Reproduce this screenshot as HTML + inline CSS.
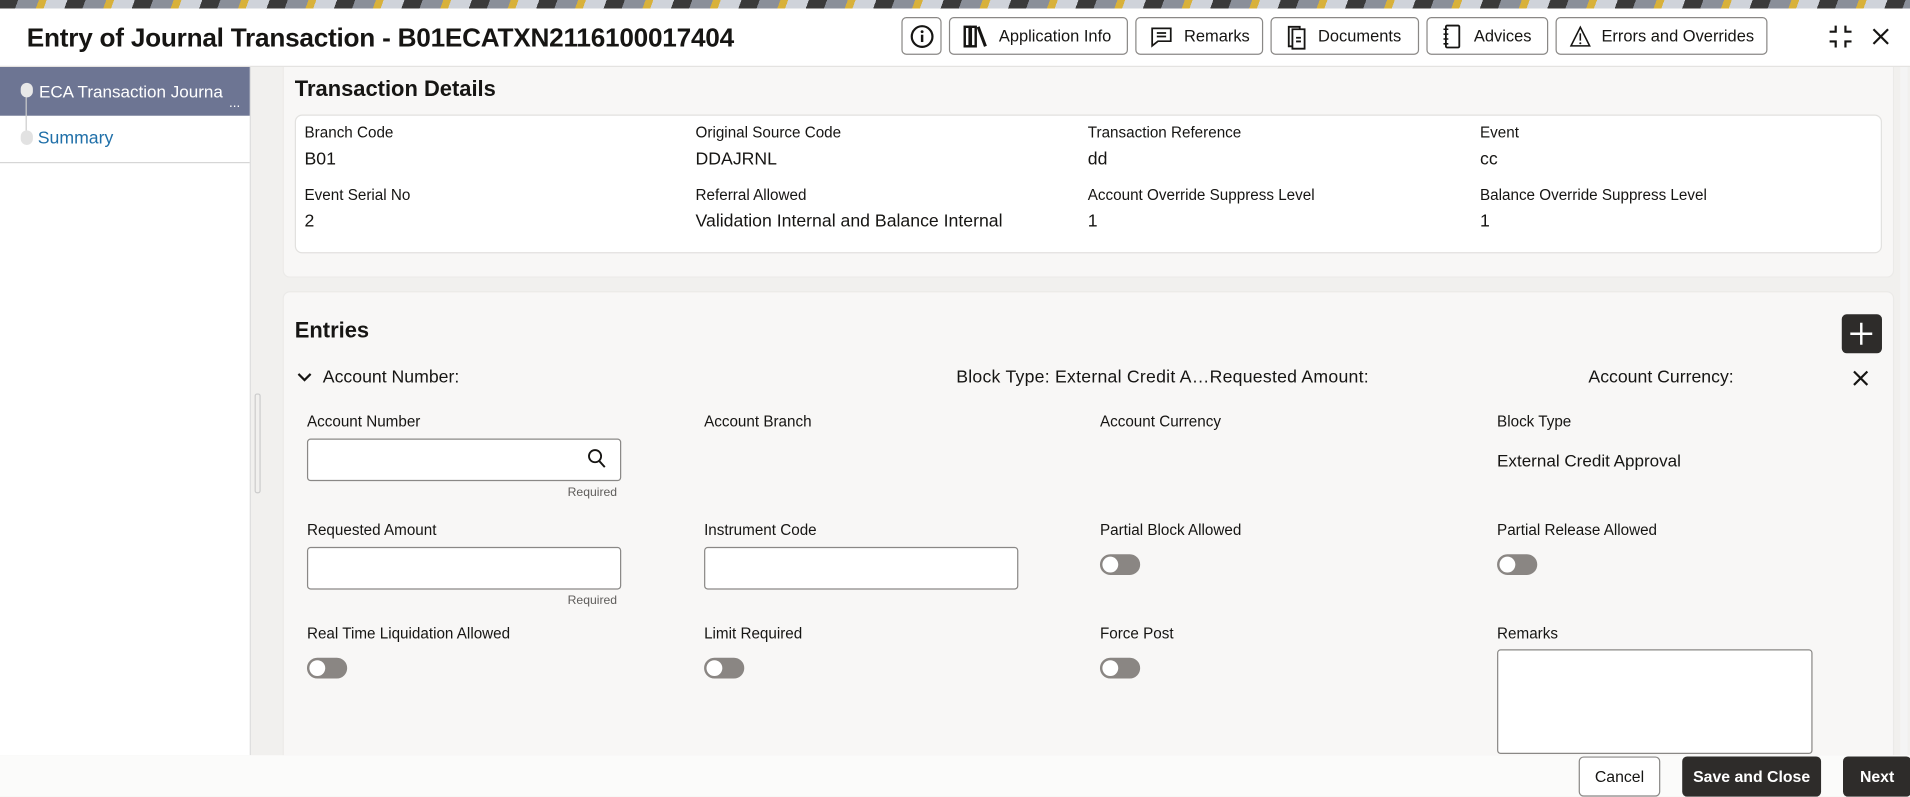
<!DOCTYPE html>
<html><head><meta charset="utf-8"><style>
html,body{margin:0;padding:0;width:1910px;height:796px;overflow:hidden;background:#f2f1ef}
#w{position:absolute;left:0;top:0;width:1568px;height:654px;transform:scale(1.21811);transform-origin:0 0;font-family:"Liberation Sans",sans-serif;color:#161513;background:#f1f0ee}
.a{position:absolute}
.btn{position:absolute;top:14px;height:31px;border:1px solid #8a8886;border-radius:4px;background:#fff;box-sizing:border-box;font-size:13.5px;display:flex;align-items:center;gap:8px;padding:0 10px;white-space:nowrap}
.lbl{position:absolute;font-size:12.5px;color:#161513}
.val{position:absolute;font-size:14.5px;color:#161513}
.inp{position:absolute;width:258px;height:35px;border:1px solid #8a8886;border-radius:3px;background:#fff;box-sizing:border-box}
.req{position:absolute;font-size:10px;color:#5f5d5b}
.tg{position:absolute;width:33px;height:17px;border-radius:9px;background:#8a8683;box-sizing:border-box;border:1px solid #8a8683}
.tg:after{content:"";position:absolute;left:1px;top:1px;width:13px;height:13px;border-radius:7px;background:#fff}
.fb{position:absolute;top:621px;height:33px;border-radius:4px;box-sizing:border-box;font-size:13px;display:flex;align-items:center;justify-content:center}
</style></head><body><div id="w">
<div class="a" style="left:0;top:0;width:1568px;height:7px;background:repeating-linear-gradient(110deg,#3a3a3a 0 14px,#8a8f99 14px 30px,#d8b13a 30px 36px,#cfd3da 36px 52px)"></div>
<div class="a" style="left:0;top:7px;width:1568px;height:47px;background:#fff;border-bottom:1px solid #e4e3e1"></div>
<div class="a" style="left:22px;top:19px;font-size:21.5px;font-weight:bold;letter-spacing:-0.2px;white-space:nowrap">Entry of Journal Transaction - B01ECATXN2116100017404</div>
<div class="btn" style="left:740px;width:33px;padding:0;justify-content:center"><svg width="20" height="20" viewBox="0 0 20 20"><circle cx="10" cy="10" r="8.5" fill="none" stroke="#161513" stroke-width="1.8"/><rect x="9" y="8.5" width="2" height="6" fill="#161513"/><circle cx="10" cy="6" r="1.2" fill="#161513"/></svg></div>
<div class="btn" style="left:779px;width:147px"><svg width="22" height="20" viewBox="0 0 22 20"><rect x="2" y="2" width="4" height="16" fill="none" stroke="#161513" stroke-width="2"/><rect x="7" y="2" width="4" height="16" fill="none" stroke="#161513" stroke-width="2"/><path d="M13 2l6 16" stroke="#161513" stroke-width="2.5"/></svg>Application Info</div>
<div class="btn" style="left:932px;width:105px"><svg width="22" height="20" viewBox="0 0 22 20"><path d="M3 3h16v11H8l-5 4z" fill="none" stroke="#161513" stroke-width="1.5"/><path d="M7 7h8M7 10h8" stroke="#161513" stroke-width="1.5"/></svg>Remarks</div>
<div class="btn" style="left:1043px;width:122px"><svg width="20" height="22" viewBox="0 0 20 22"><path d="M4 3h9v16H4z" fill="none" stroke="#161513" stroke-width="1.5"/><path d="M7 5h10v16H7z" fill="#fff" stroke="#161513" stroke-width="1.5"/><path d="M10 12h4M10 15h4" stroke="#161513" stroke-width="1.5"/></svg>Documents</div>
<div class="btn" style="left:1171px;width:100px"><svg width="20" height="22" viewBox="0 0 20 22"><rect x="5" y="2" width="11" height="18" rx="1" fill="none" stroke="#161513" stroke-width="1.5"/><path d="M3 5h4M3 9h4M3 13h4M3 17h4" stroke="#161513" stroke-width="1.3"/></svg>Advices</div>
<div class="btn" style="left:1277px;width:174px"><svg width="22" height="22" viewBox="0 0 22 22"><path d="M11 2L20 20H2z" fill="none" stroke="#161513" stroke-width="1.5"/><path d="M11 8v7" stroke="#161513" stroke-width="1.5"/><circle cx="11" cy="17.5" r="1" fill="#161513"/></svg>Errors and Overrides</div>
<svg class="a" style="left:1500px;top:19px" width="22" height="22" viewBox="0 0 22 22"><path d="M7 2v5H2M15 2v5h5M7 20v-5H2M15 20v-5h5" fill="none" stroke="#161513" stroke-width="1.8"/></svg>
<svg class="a" style="left:1537px;top:23px" width="14" height="14" viewBox="0 0 14 14"><path d="M1 1l12 12M13 1L1 13" stroke="#161513" stroke-width="1.8"/></svg>
<div class="a" style="left:0;top:55px;width:205px;height:565px;background:#fff;border-right:1px solid #ddd"></div>
<div class="a" style="left:0;top:55px;width:205px;height:40px;background:#6d7593"></div>
<div class="a" style="left:32px;top:67px;font-size:14px;color:#fff;white-space:nowrap">ECA Transaction Journa</div>
<div class="a" style="left:188px;top:79px;font-size:11px;color:#fff">...</div>
<div class="a" style="left:17px;top:68px;width:10px;height:12px;border-radius:5px;background:#e8e8e8"></div>
<div class="a" style="left:21px;top:80px;width:1px;height:30px;background:#ccc"></div>
<div class="a" style="left:17px;top:107px;width:10px;height:12px;border-radius:5px;background:#e2e2e2"></div>
<div class="a" style="left:31px;top:106px;font-size:14.5px;color:#1f6fa8">Summary</div>
<div class="a" style="left:0;top:133px;width:205px;height:1px;background:#d6d6d6"></div>
<div class="a" style="left:209px;top:323px;width:5px;height:82px;border:1px solid #ccc;border-radius:2px;box-sizing:border-box"></div>
<div class="a" style="left:232px;top:55px;width:1323px;height:173px;background:#f8f7f6;border:1px solid #ebeae8;border-top:none;border-radius:0 0 6px 6px;box-sizing:border-box"></div>
<div class="a" style="left:242px;top:63px;font-size:18px;font-weight:bold">Transaction Details</div>
<div class="a" style="left:242px;top:94px;width:1303px;height:114px;background:#fff;border:1px solid #e2e1df;border-radius:6px;box-sizing:border-box"></div>
<div class="lbl" style="left:250px;top:102px">Branch Code</div><div class="val" style="left:250px;top:123px">B01</div>
<div class="lbl" style="left:571px;top:102px">Original Source Code</div><div class="val" style="left:571px;top:123px">DDAJRNL</div>
<div class="lbl" style="left:893px;top:102px">Transaction Reference</div><div class="val" style="left:893px;top:123px">dd</div>
<div class="lbl" style="left:1215px;top:102px">Event</div><div class="val" style="left:1215px;top:123px">cc</div>
<div class="lbl" style="left:250px;top:153px">Event Serial No</div><div class="val" style="left:250px;top:174px">2</div>
<div class="lbl" style="left:571px;top:153px">Referral Allowed</div><div class="val" style="left:571px;top:174px">Validation Internal and Balance Internal</div>
<div class="lbl" style="left:893px;top:153px">Account Override Suppress Level</div><div class="val" style="left:893px;top:174px">1</div>
<div class="lbl" style="left:1215px;top:153px">Balance Override Suppress Level</div><div class="val" style="left:1215px;top:174px">1</div>
<div class="a" style="left:232px;top:239px;width:1323px;height:382px;background:#f8f7f6;border:1px solid #ebeae8;border-radius:6px 6px 0 0;box-sizing:border-box"></div>
<div class="a" style="left:242px;top:261px;font-size:18px;font-weight:bold">Entries</div>
<div class="a" style="left:1512px;top:258px;width:33px;height:32px;border-radius:4px;background:#2e2c2a"></div>
<svg class="a" style="left:1518px;top:264px" width="20" height="20" viewBox="0 0 20 20"><path d="M10 1v18M1 10h18" stroke="#fff" stroke-width="2"/></svg>
<svg class="a" style="left:243px;top:304px" width="14" height="12" viewBox="0 0 14 12"><path d="M2 3l5 5 5-5" fill="none" stroke="#161513" stroke-width="1.8"/></svg>
<div class="a" style="left:265px;top:302px;font-size:14.5px;white-space:nowrap">Account Number:</div>
<div class="a" style="left:785px;top:302px;font-size:14.5px;white-space:nowrap;letter-spacing:0.2px">Block Type: External Credit A…Requested Amount:</div>
<div class="a" style="left:1304px;top:302px;font-size:14.5px;white-space:nowrap">Account Currency:</div>
<svg class="a" style="left:1521px;top:304px" width="13" height="13" viewBox="0 0 13 13"><path d="M1 1l11 11M12 1L1 12" stroke="#161513" stroke-width="1.8"/></svg>
<div class="lbl" style="left:252px;top:339px">Account Number</div>
<div class="inp" style="left:252px;top:360px"></div>
<svg class="a" style="left:482px;top:368px" width="16" height="17" viewBox="0 0 16 17"><circle cx="6.5" cy="6.5" r="5" fill="none" stroke="#161513" stroke-width="1.5"/><path d="M10 10.5l4.5 5" stroke="#161513" stroke-width="1.6"/></svg>
<div class="req" style="left:466px;top:399px">Required</div>
<div class="lbl" style="left:578px;top:339px">Account Branch</div>
<div class="lbl" style="left:903px;top:339px">Account Currency</div>
<div class="lbl" style="left:1229px;top:339px">Block Type</div>
<div class="a" style="left:1229px;top:370px;font-size:14px">External Credit Approval</div>
<div class="lbl" style="left:252px;top:428px">Requested Amount</div>
<div class="inp" style="left:252px;top:449px"></div>
<div class="req" style="left:466px;top:488px">Required</div>
<div class="lbl" style="left:578px;top:428px">Instrument Code</div>
<div class="inp" style="left:578px;top:449px"></div>
<div class="lbl" style="left:903px;top:428px">Partial Block Allowed</div>
<div class="tg" style="left:903px;top:455px"></div>
<div class="lbl" style="left:1229px;top:428px">Partial Release Allowed</div>
<div class="tg" style="left:1229px;top:455px"></div>
<div class="lbl" style="left:252px;top:513px">Real Time Liquidation Allowed</div>
<div class="tg" style="left:252px;top:540px"></div>
<div class="lbl" style="left:578px;top:513px">Limit Required</div>
<div class="tg" style="left:578px;top:540px"></div>
<div class="lbl" style="left:903px;top:513px">Force Post</div>
<div class="tg" style="left:903px;top:540px"></div>
<div class="lbl" style="left:1229px;top:513px">Remarks</div>
<div class="a" style="left:1229px;top:533px;width:259px;height:86px;border:1px solid #8a8886;border-radius:3px;background:#fff;box-sizing:border-box"></div>
<div class="a" style="left:1560px;top:55px;width:6px;height:565px;background:#f4f4f4"></div>
<div class="a" style="left:0;top:620px;width:1568px;height:34px;background:#fbfbfa"></div>
<div class="fb" style="left:1296px;width:67px;background:#fff;border:1px solid #8a8886">Cancel</div>
<div class="fb" style="left:1381px;width:114px;background:#2e2c2a;color:#fff;font-weight:bold">Save and Close</div>
<div class="fb" style="left:1513px;width:56px;background:#2e2c2a;color:#fff;font-weight:bold">Next</div>
</div></body></html>
